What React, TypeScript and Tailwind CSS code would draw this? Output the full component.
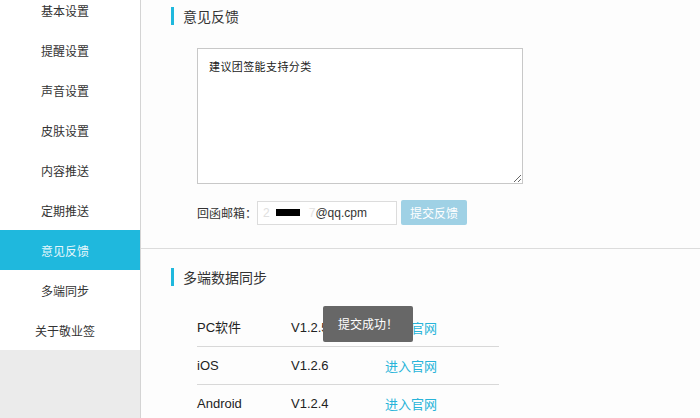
import React from "react";

const cjk = { fontFamily: '"Noto Sans CJK SC", "Liberation Sans", sans-serif' };
const latin = { fontFamily: '"Liberation Sans", "Noto Sans CJK SC", sans-serif' };

const menu = ["基本设置", "提醒设置", "声音设置", "皮肤设置", "内容推送", "定期推送", "意见反馈", "多端同步", "关于敬业签"];

const rows = [
  { name: "PC软件", ver: "V1.2.5" },
  { name: "iOS", ver: "V1.2.6" },
  { name: "Android", ver: "V1.2.4" },
];

function SectionTitle({ text }: { text: string }) {
  return (
    <div className="flex items-center h-[18px]">
      <div className="w-[3px] h-[18px] bg-[#1fb8dd]" />
      <span className="ml-[9px] text-[14px] text-[#333] leading-none" style={cjk}>{text}</span>
    </div>
  );
}

export default function App() {
  return (
    <div className="relative w-[700px] h-[418px] overflow-hidden flex bg-white" style={cjk}>
      <aside className="w-[140px] shrink-0 flex flex-col bg-[#ebebeb]">
        <div className="-mt-[10px] bg-white">
          {menu.map((m) => {
            const active = m === "意见反馈";
            return (
              <div
                key={m}
                className={`h-[40px] flex items-center justify-center pr-[10px] pt-[2px] text-[12px] ${active ? "bg-[#1fb8dd] text-[#e6f7fc]" : "text-[#333]"}`}
              >
                {m}
              </div>
            );
          })}
        </div>
      </aside>
      <main className="flex-1 border-l border-[#d4d4d4] bg-[#fdfdfd] flex flex-col">
        <div className="pt-[7px] pl-[30px]">
          <SectionTitle text="意见反馈" />
        </div>
        <div className="mt-[23px] pl-[56px]">
          <textarea
            readOnly
            defaultValue="建议团签能支持分类"
            className="block w-[326px] h-[136px] border border-[#c8c8c8] bg-white pl-[11px] pt-[9px] text-[11px] tracking-[0.4px] text-[#222] outline-none"
            style={cjk}
          />
          <div className="mt-[16px] flex items-center h-[25px]">
            <span className="text-[12px] text-[#333] w-[60px]">回函邮箱：</span>
            <div className="w-[140px] h-[24px] border border-[#dcdcdc] bg-white flex items-center pl-[5px] text-[12px] text-[#333]" style={latin}>
              <span className="text-[#e0e0e0]">2</span>
              <span className="ml-[6px] w-[24px] h-[7px] bg-black" />
              <span className="ml-[9px] text-[#e4e4e4]">7</span>
              <span>@qq.cpm</span>
            </div>
            <div className="ml-[4px] w-[66px] h-[25px] rounded-[2px] bg-[#9fd1e5] text-white text-[12px] flex items-center justify-center">
              提交反馈
            </div>
          </div>
        </div>
        <div className="mt-[23px] border-t border-[#dcdcdc]" />
        <div className="pt-[19px] pl-[30px]">
          <SectionTitle text="多端数据同步" />
        </div>
        <div className="mt-[23px] ml-[56px] w-[302px]">
          {rows.map((r) => (
            <div key={r.name} className="h-[38px] border-b border-[#d8d8d8] flex items-center text-[13px] text-[#222]">
              <span className="w-[94px]" style={latin}>{r.name}</span>
              <span className="w-[94px]" style={latin}>{r.ver}</span>
              <span className="text-[#28b4d9]" style={cjk}>进入官网</span>
            </div>
          ))}
        </div>
      </main>
      <div className="absolute left-[323px] top-[306px] w-[90px] h-[36px] rounded-[2px] bg-[#676767] text-white text-[12px] flex items-center justify-center">
        提交成功！
      </div>
    </div>
  );
}
